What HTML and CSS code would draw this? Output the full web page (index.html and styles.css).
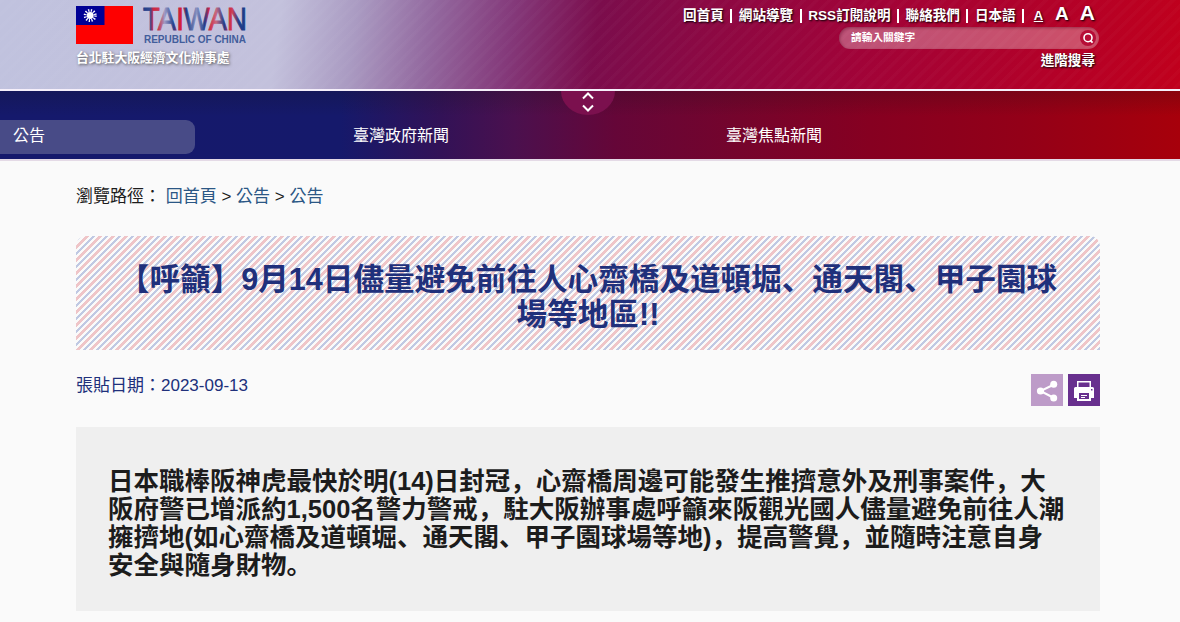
FILE: index.html
```html
<!DOCTYPE html>
<html lang="zh-Hant">
<head>
    <meta charset="UTF-8">
    <meta name="viewport" content="width=device-width, initial-scale=1.0">
    <title>台北駐大阪經濟文化辦事處</title>
    <link rel="stylesheet" href="styles.css">
</head>
<body>
    <header class="header">
        <div class="container header-inner">
            <div class="brand">
                <div class="logo">
                    <svg class="flag" width="57" height="38" viewBox="0 0 57 38">
                        <path fill="#fe0000" d="M0 0h57v38H0z"/>
                        <path fill="#000095" d="M0 0h28.5v19H0z"/>
                        <circle cx="14.2" cy="9.5" r="5" fill="none" stroke="#fff" stroke-width="3" stroke-dasharray="1.2 1.418"/>
                        <circle cx="14.2" cy="9.5" r="3.4" fill="#fff"/>
                    </svg>
                    <svg class="wordmark" width="106" height="40" viewBox="0 0 106 40">
                        <defs>
                            <linearGradient id="letters" gradientUnits="userSpaceOnUse" x1="0" y1="0" x2="103" y2="0">
                                <stop offset="0" stop-color="#1f3c88"/>
                                <stop offset=".07" stop-color="#34498f"/>
                                <stop offset=".1" stop-color="#cf2540"/>
                                <stop offset=".15" stop-color="#c9344f"/>
                                <stop offset=".21" stop-color="#9d9ac4"/>
                                <stop offset=".3" stop-color="#1f3c88"/>
                                <stop offset=".34" stop-color="#d0203a"/>
                                <stop offset=".39" stop-color="#d0203a"/>
                                <stop offset=".42" stop-color="#1f3c88"/>
                                <stop offset=".52" stop-color="#8790bf"/>
                                <stop offset=".6" stop-color="#1f3c88"/>
                                <stop offset=".64" stop-color="#cf2540"/>
                                <stop offset=".71" stop-color="#c86880"/>
                                <stop offset=".79" stop-color="#1f3c88"/>
                                <stop offset=".83" stop-color="#cf2540"/>
                                <stop offset=".87" stop-color="#c9405b"/>
                                <stop offset=".93" stop-color="#1f3c88"/>
                                <stop offset="1" stop-color="#1f3c88"/>
                            </linearGradient>
                        </defs>
                        <text class="wordmark-name" x="0" y="24" textLength="104" lengthAdjust="spacingAndGlyphs" fill="url(#letters)" stroke="url(#letters)">TAIWAN</text>
                        <text class="wordmark-sub" x="1" y="37" textLength="102" lengthAdjust="spacingAndGlyphs">REPUBLIC OF CHINA</text>
                    </svg>
                </div>
                <div class="office">台北駐大阪經濟文化辦事處</div>
            </div>
            <div class="tools">
                <div class="links">
                    <a>回首頁</a><i></i><a>網站導覽</a><i></i><a>RSS訂閱說明</a><i></i><a>聯絡我們</a><i></i><a>日本語</a><i></i>
                    <a class="size small">A</a><a class="size medium">A</a><a class="size large">A</a>
                </div>
                <div class="search">
                    <span>請輸入關鍵字</span>
                    <svg width="18" height="18" viewBox="0 0 18 18">
                        <circle cx="9" cy="9" r="8" fill="#b70d36"/>
                        <circle cx="9" cy="8.7" r="4" fill="none" stroke="#fff" stroke-width="1.6"/>
                        <path d="M11.3 11.3l2.3 2.3" stroke="#fff" stroke-width="1.8"/>
                    </svg>
                </div>
                <a class="advanced">進階搜尋</a>
            </div>
        </div>
    </header>
    <nav class="nav">
        <div class="toggle">
            <svg width="12" height="20" viewBox="0 0 12 20" fill="none" stroke="#fff" stroke-width="2">
                <path d="M1 6.5l5-5 5 5M1 13.5l5 5 5-5"/>
            </svg>
        </div>
        <div class="menu">
            <a class="active">公告</a>
            <a>臺灣政府新聞</a>
            <a>臺灣焦點新聞</a>
        </div>
    </nav>
    <main class="container">
        <div class="path">瀏覽路徑： <a>回首頁</a> &gt; <a>公告</a> &gt; <a>公告</a></div>
        <h1 class="title" lang="zh-CN">【呼籲】9月14日儘量避免前往人心齋橋及道頓堀、通天閣、甲子園球<br>場等地區!!</h1>
        <div class="info">
            <div class="date">張貼日期：2023-09-13</div>
            <div class="actions">
                <svg class="share" width="32" height="32" viewBox="0 0 32 32" fill="#fff">
                    <path d="M23 10.500L9.500 17 23 24" fill="none" stroke="#fff" stroke-width="2"/>
                    <circle cx="22.700" cy="10.300" r="3.500"/>
                    <circle cx="9.500" cy="17" r="3.600"/>
                    <circle cx="22.700" cy="24" r="3.500"/>
                </svg>
                <svg class="print" width="32" height="32" viewBox="0 0 32 32">
                    <path fill="#fff" d="M9 7h14v6h1.500q1.500 0 1.500 1.500V24h-3v3H9v-3H6v-9.500Q6 13 7.500 13H9z"/>
                    <path fill="#68308e" d="M10.500 8.500h11V13h-11zM11 19h10v6H11zM23 15h1.500v1.500H23z"/>
                    <path stroke="#fff" d="M13 21.500h6M13 23.500h4"/>
                </svg>
            </div>
        </div>
        <div class="article" lang="zh-CN">
            日本職棒阪神虎最快於明(14)日封冠，心齋橋周邊可能發生推擠意外及刑事案件，大<br>阪府警已增派約1,500名警力警戒，駐大阪辦事處呼籲來阪觀光國人儘量避免前往人潮<br>擁擠地(如心齋橋及道頓堀、通天閣、甲子園球場等地)，提高警覺，並隨時注意自身<br>安全與隨身財物。
        </div>
    </main>
</body>
</html>
```

FILE: styles.css
```css
* {
    box-sizing: border-box;
}

body {
    margin: 0;
    height: 622px;
    overflow: hidden;
    background: #fafafa;
    color: #1c1c1c;
    font-family: "Liberation Sans", "Noto Sans CJK TC", sans-serif;
    font-size: 17px;
}

.container {
    width: 1024px;
    margin-left: 76px;
}

/* Header */
.header {
    height: 91px;
    border-bottom: 2px solid #f5effa;
    background:
        repeating-linear-gradient(135deg, rgba(255, 255, 255, 0.02) 0 3px, transparent 4px 9px),
        linear-gradient(98deg, #c0c2de 0, #c3c1dc 280px, #aa9bc2 355px, #93699f 430px, #84397a 510px, #7b0d4c 595px, #8e0842 720px, #a10338 860px, #b20129 1040px, #c1001c 1190px);
}

.header-inner {
    display: flex;
    justify-content: space-between;
}

.brand {
    padding-top: 6px;
}

.logo {
    display: flex;
    gap: 10px;
    height: 38px;
}

.wordmark {
    overflow: visible;
}

.wordmark-name {
    font: 32px "Liberation Sans", sans-serif;
    stroke-width: 0.9px;
}

.wordmark-sub {
    font: bold 10.5px "Liberation Sans", sans-serif;
    fill: #425d9b;
}

.office {
    margin-top: 4px;
    color: #fff;
    font-size: 12.8px;
    font-weight: bold;
    line-height: 20px;
    text-shadow: 1px 1px 3px #555;
}

.tools {
    display: flex;
    flex-direction: column;
    align-items: flex-end;
    color: #fff;
    font-weight: bold;
    text-shadow: 1px 1px 2px #000;
}

.links {
    display: flex;
    align-items: center;
    height: 27px;
    padding: 4px 5px 0 0;
    font-size: 13.6px;
    line-height: 24px;
}

.links i {
    width: 2px;
    height: 14px;
    margin: 0 6.5px;
    background: #fff;
}

.size {
    line-height: 20px;
}

.small {
    margin: 1px 12px 0 3px;
    font-size: 13px;
    text-decoration: underline;
}

.medium {
    margin: -4px 11px 0 0;
    font-size: 19px;
}

.large {
    margin-top: -5px;
    font-size: 21px;
}

.search {
    display: flex;
    align-items: center;
    justify-content: space-between;
    width: 260px;
    height: 22px;
    margin-right: 1px;
    padding: 0 2px 0 12px;
    border-radius: 11px;
    background: rgba(255, 255, 255, 0.31);
    box-shadow: inset 1px 1px 3px rgba(80, 0, 30, 0.4);
    font-size: 10.7px;
    line-height: 18px;
    text-shadow: none;
}

.search span {
    margin-top: -2px;
}

.advanced {
    margin: 2px 5px 0 0;
    font-size: 13.6px;
    line-height: 20px;
}

/* Navigation */
.nav {
    height: 70px;
    border-bottom: 2px solid #e4dae6;
    background:
        linear-gradient(rgba(20, 20, 20, 0.2), transparent 25px),
        linear-gradient(90deg, #15196c 0, #15196b 340px, #321257 440px, #4b104e 515px, #650638 615px, #75042c 740px, #860021 870px, #930018 1020px, #a7000b 1180px);
    color: #fff;
}

.toggle {
    display: flex;
    justify-content: center;
    width: 54px;
    height: 24px;
    margin-left: 561px;
    padding-top: 1px;
    border-radius: 0 0 27px 27px / 0 0 24px 24px;
    background: #7b104e;
}

.menu {
    display: grid;
    grid-template-columns: 195px 373px 1fr;
    margin-top: 5px;
    font-size: 16px;
    line-height: 32px;
}

.menu a {
    padding-left: 158px;
}

.menu .active {
    height: 34px;
    padding-left: 13px;
    border-radius: 0 9px 9px 0;
    background: #484b87;
}

/* Content */
.path {
    padding-top: 23px;
    line-height: 26px;
}

.path a {
    color: #2b5785;
}

.title {
    height: 114px;
    margin: 26px 0 0;
    padding-top: 26px;
    border-radius: 10px 10px 0 0;
    /* 13px tile, the stripes meet at its edges */
    background: repeating-linear-gradient(135deg, #fafafa 0 12.5%, #c0c9e3 12.5% 25%, #fafafa 25% 37.5%, #efc5c8 37.5% 50%) 0 0 / 13px 13px;
    color: #20307b;
    font-family: "Liberation Sans", "Noto Sans CJK SC", sans-serif;
    font-size: 30.6px;
    line-height: 35px;
    text-align: center;
}

.info {
    display: flex;
    justify-content: space-between;
    margin-top: 24px;
    color: #20307b;
    line-height: 24px;
}

.actions {
    display: flex;
    gap: 5px;
}

.share {
    background: #bd9bc8;
}

.print {
    background: #68308e;
}

.article {
    height: 184px;
    margin-top: 21px;
    padding: 40px 32px;
    background: #efefef;
    font-family: "Liberation Sans", "Noto Sans CJK SC", sans-serif;
    font-size: 25.5px;
    font-weight: bold;
    line-height: 28px;
    white-space: nowrap;
}
```
